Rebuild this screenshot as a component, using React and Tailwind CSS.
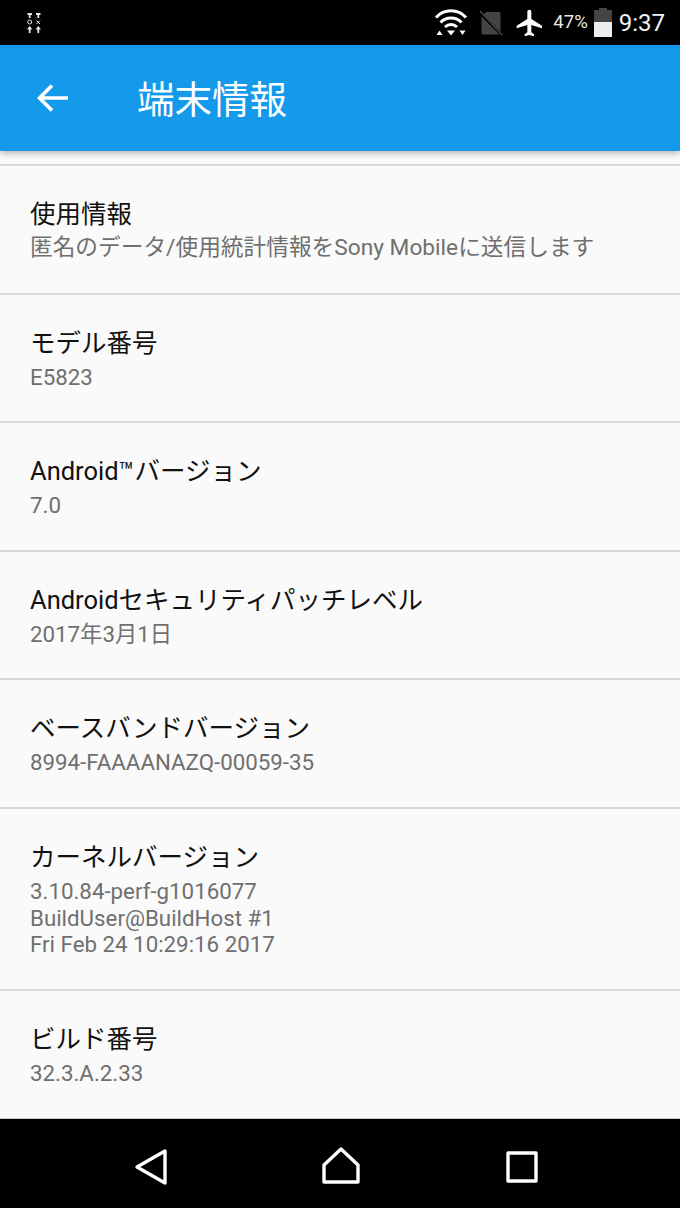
import React from 'react';

const rows = [
  { title: '使用情報', lines: ['匿名のデータ/使用統計情報をSony Mobileに送信します'], size: 'text-[22.700px]' },
  { title: 'モデル番号', lines: ['E5823'], size: 'text-[22.300px]' },
  { title: 'Android™バージョン', lines: ['7.0'], size: 'text-[22.300px]' },
  { title: 'Androidセキュリティパッチレベル', lines: ['2017年3月1日'], size: 'text-[22.300px]' },
  { title: 'ベースバンドバージョン', lines: ['8994-FAAAANAZQ-00059-35'], size: 'text-[22.300px]' },
  { title: 'カーネルバージョン', lines: ['3.10.84-perf-g1016077', 'BuildUser@BuildHost #1', 'Fri Feb 24 10:29:16 2017'], size: 'text-[22.300px]' },
  { title: 'ビルド番号', lines: ['32.3.A.2.33'], size: 'text-[22.300px]' },
];

const StatusBar = () => (
  <div className="h-[45px] bg-black flex items-center shrink-0 text-white">
    {/* debug icon top left */}
    <svg width="16" height="22" viewBox="0 0 16 22" className="ml-[26px]" fill="none" stroke="#e4e4e4" strokeWidth="1.800">
      <path d="M1.500 2h4.500M3.700 2v4M3.700 21v-6M10 2h4.500M12.300 2v4M12.300 21v-6" />
      <path d="M1 17.500h5.400l-2.700-3.500zM9.600 17.500H15l-2.700-3.500z" fill="#e4e4e4" stroke="none" />
      <circle cx="3.700" cy="10" r="2" strokeWidth="1" />
      <path d="M10.500 8.500l3.500 3.500M14 8.500l-3.500 3.500" strokeWidth="1" />
    </svg>
    <div className="ml-auto flex items-center">
      <svg width="34" height="28" viewBox="0 0 34 28" fill="none" stroke="#fff" strokeWidth="3">
        <path d="M2 8.500C10-0.500 24-0.500 32 8.500" />
        <path d="M6.500 13.500C12 7.500 22 7.500 27.500 13.500" />
        <path d="M11 18c3.500-3.500 8.500-3.500 12 0" />
        <path d="M13 21.500h8l-4 5z" fill="#fff" stroke="none" />
        <path d="M2.500 26l3-4.500 3 4.500z" fill="#fff" stroke="none" />
        <path d="M25.500 21.500h6l-3 4.500z" fill="#fff" stroke="none" />
      </svg>
      <svg width="24" height="28" viewBox="0 0 24 28" className="ml-[11px]">
        <path d="M7 3h13a1.500 1.500 0 0 1 1.500 1.500V24a1.500 1.500 0 0 1-1.500 1.500H4a1.500 1.500 0 0 1-1.500-1.500V8z" fill="#444" />
        <path d="M0 3l24 24" stroke="#000" strokeWidth="3" />
        <path d="M1 2l22 24" stroke="#444" strokeWidth="1.500" />
      </svg>
      <svg width="32" height="32" viewBox="0 0 24 24" fill="#fff" className="ml-[11px]">
        <path d="M21 16v-2l-8-5V3.500a1.500 1.500 0 0 0-3 0V9l-8 5v2l8-2.500V19l-2 1.500V22l3.500-1 3.500 1v-1.500L13 19v-5.500z" />
      </svg>
      <span className="ml-[7px] text-[18.500px] leading-none text-[#e8e8e8]">47%</span>
      <div className="ml-[6px] w-[18px] h-[29px] flex flex-col items-center">
        <div className="w-[8px] h-[2px] bg-[#444]" />
        <div className="w-full h-[12px] bg-[#444]" />
        <div className="w-full h-[15px] bg-[#eee]" />
      </div>
      <span className="ml-[7px] mr-[15px] text-[24px] leading-none text-[#f4f4f4]">9:37</span>
    </div>
  </div>
);

const Header = () => (
  <div className="h-[106px] bg-[#159aeb] flex items-center shrink-0 shadow-[0_2px_7px_rgba(0,0,0,0.3)] relative z-10">
    <svg width="32" height="32" viewBox="0 0 32 32" fill="none" stroke="#fff" strokeWidth="3.600" className="ml-[37px]">
      <path d="M31 16H2.500M15 3.500L2.500 16 15 28.500" />
    </svg>
    <span className="ml-[68px] pt-[5px] text-[37.500px] leading-none text-white">端末情報</span>
  </div>
);

const NavBar = () => (
  <div className="h-[90px] bg-black flex items-start shrink-0 border-t border-[#ccc]">
    <svg width="34" height="38" viewBox="0 0 34 38" fill="none" stroke="#fff" strokeWidth="3.400" strokeLinejoin="round" className="ml-[134px] mt-[29px]">
      <path d="M31 3v32L3 19z" />
    </svg>
    <svg width="38" height="38" viewBox="0 0 38 38" fill="none" stroke="#fff" strokeWidth="3.400" strokeLinejoin="round" className="ml-[154px] mt-[28px]">
      <path d="M2 18L19 2l17 16v17H2z" />
    </svg>
    <svg width="32" height="32" viewBox="0 0 32 32" fill="none" stroke="#fff" strokeWidth="3.400" strokeLinejoin="round" className="ml-[146px] mt-[32px]">
      <path d="M2 2h28v28H2z" />
    </svg>
  </div>
);

export default function App() {
  return (
    <div className="w-[680px] h-[1208px] flex flex-col overflow-hidden bg-[#fafafa] font-['Roboto','Noto_Sans_CJK_JP',sans-serif]">
      <StatusBar />
      <Header />
      <div className="flex-1 min-h-0 overflow-hidden pt-[13px]">
        <div className="border-t-2 border-[#d8d8d8]">
          {rows.map((row, i) => (
            <div
              key={row.title}
              className={`pl-[30px] pt-[31px] pb-[31px] ${i < rows.length - 1 ? 'border-b-2 border-[#d8d8d8]' : ''}`}
            >
              <div className="text-[25.500px] leading-[34px] text-[#111]">{row.title}</div>
              <div className={`mt-[4px] ${row.size} leading-[26.600px] text-[#6f6f6f]`}>
                {row.lines.map((line) => (
                  <div key={line}>{line}</div>
                ))}
              </div>
            </div>
          ))}
        </div>
      </div>
      <NavBar />
    </div>
  );
}
